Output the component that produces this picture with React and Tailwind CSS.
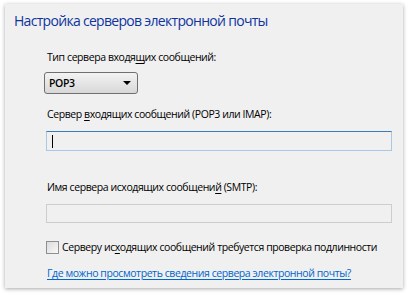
import React from 'react';

const font = { fontFamily: '"Segoe UI", "Open Sans", "Noto Sans", sans-serif' };

function Mn({ children }) {
  return <span className="underline underline-offset-2">{children}</span>;
}

export default function App() {
  return (
    <div className="w-[410px] h-[295px] bg-white pt-[4px] pl-[5px]" style={font}>
      <div className="w-[398px] h-[284px] bg-[#f0f0f0] shadow-[0_1px_4px_rgba(0,0,0,0.35)] flex flex-col">
        <div className="h-[36px] pl-[9px] pt-[7px] text-[14px] leading-[20px] tracking-[-0.7px] text-[#0f349e]">
          Настройка серверов электронной почты
        </div>
        <div className="pl-[41px] pr-[11px] flex flex-col text-[10.5px] leading-[15px] tracking-[-0.42px] text-black">
          <div className="h-[15px] mt-[10px] pl-px">
            Тип сервера входя<Mn>щ</Mn>их сообщений:
          </div>
          <div className="mt-[7px] -ml-[2px] w-[94px] h-[22px] rounded-[3px] border border-[#707070] bg-gradient-to-b from-[#f3f3f3] to-[#d8d8d8] flex items-center justify-between pl-[4px] pr-[6px]">
            <span className="font-semibold">POP3</span>
            <span className="w-0 h-0 border-l-[4px] border-r-[4px] border-t-[4px] border-l-transparent border-r-transparent border-t-black" />
          </div>
          <div className="h-[15px] mt-[13px] pl-px">
            Сервер <Mn>в</Mn>ходящих сообщений (POP3 или IMAP):
          </div>
          <div className="mt-[9px] h-[20px] border border-[#a9c8e6] border-t-[#3d7bb3] bg-[#f0f0f0] flex items-center pl-[5px]">
            <span className="w-px h-[13px] bg-black" />
          </div>
          <div className="h-[15px] mt-[29px] pl-px">
            Имя сервера исходящих сообщени<Mn>й</Mn> (SMTP):
          </div>
          <div className="mt-[9px] h-[19px] border border-[#cdcdcd] bg-[#f0f0f0]" />
          <div className="mt-[17px] h-[15px] flex items-center gap-[3px]">
            <span className="w-[13px] h-[13px] shrink-0 border border-[#8f8f8f] bg-gradient-to-br from-[#dcdcdc] to-[#f8f8f8]" />
            <span className="whitespace-nowrap">
              Серверу ис<Mn>х</Mn>одящих сообщений требуется проверка подлинности
            </span>
          </div>
          <a href="#" className="mt-[11px] h-[15px] pl-px text-[#0066cc] underline underline-offset-2 whitespace-nowrap">
            Где можно просмотреть сведения сервера электронной почты?
          </a>
        </div>
      </div>
    </div>
  );
}
